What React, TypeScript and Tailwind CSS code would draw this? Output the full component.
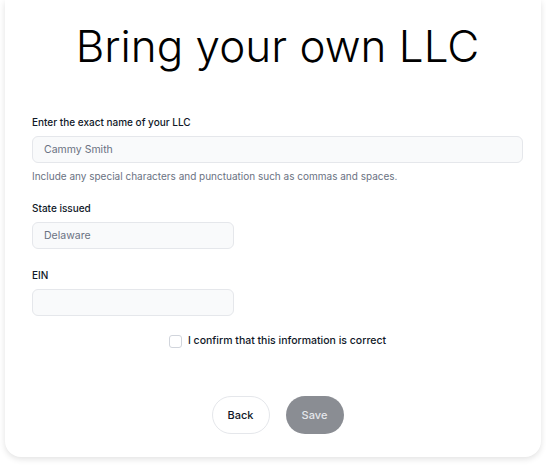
import React from 'react';

function Field({ label, value, wide, className }: { label: string; value: string; wide?: boolean; className?: string }) {
  return (
    <div className={className}>
      <label className="block text-[10px] leading-4 font-medium text-gray-900">{label}</label>
      <input
        readOnly
        placeholder={value}
        className={`mt-[6px] h-[27px] rounded-md border border-gray-200 bg-gray-50 px-[11px] text-[10.5px] text-gray-500 placeholder:text-gray-500 outline-none ${wide ? 'w-full' : 'w-[202px]'}`}
      />
    </div>
  );
}

export default function App() {
  const [confirmed, setConfirmed] = React.useState(false);

  return (
    <div className="min-h-screen bg-white px-[5px] font-['Inter',sans-serif]">
      <div className="rounded-b-2xl bg-white pl-[27px] pr-[18px] pt-[24px] pb-[23px] shadow-[0_2px_6px_rgba(0,0,0,0.12)]">
        <h1 className="text-center text-[44px] leading-none font-light text-black">Bring your own LLC</h1>

        <Field className="mt-[46px]" label="Enter the exact name of your LLC" value="Cammy Smith" wide />
        <p className="mt-[5px] text-[10px] leading-4 text-gray-500">
          Include any special characters and punctuation such as commas and spaces.
        </p>

        <Field className="mt-[16px]" label="State issued" value="Delaware" />
        <Field className="mt-[18px]" label="EIN" value="" />

        <label className="mt-[17px] flex items-center justify-center gap-[6px]">
          <input
            type="checkbox"
            checked={confirmed}
            onChange={() => setConfirmed(!confirmed)}
            className="h-[13px] w-[13px] appearance-none rounded-[3px] border border-gray-300 bg-white"
          />
          <span className="text-[10.5px] leading-4 font-medium text-gray-900">I confirm that this information is correct</span>
        </label>

        <div className="mt-[47px] flex justify-center gap-4">
          <button className="h-[38px] w-[58px] rounded-full border border-gray-200 bg-white text-[11px] font-medium text-gray-900">
            Back
          </button>
          <button className="h-[38px] w-[58px] rounded-full bg-[#8a8d93] text-[11px] font-medium text-gray-200">
            Save
          </button>
        </div>
      </div>
    </div>
  );
}
